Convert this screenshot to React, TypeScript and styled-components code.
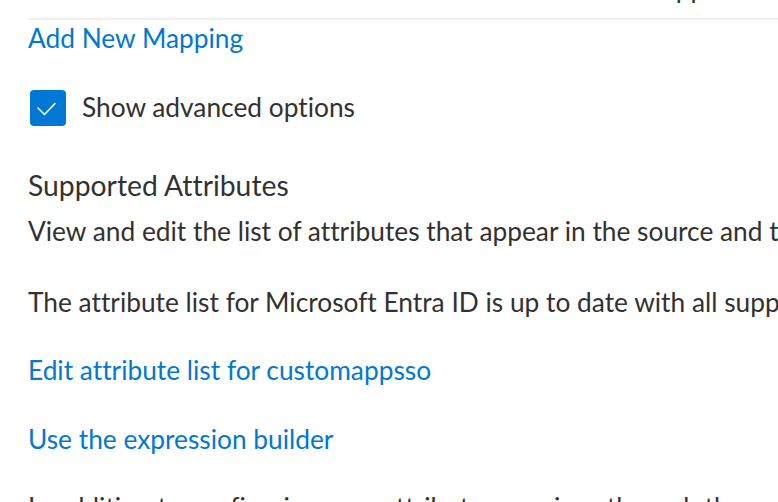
import React from "react";
import styled, { createGlobalStyle } from "styled-components";

const Global = createGlobalStyle`
  html, body {
    margin: 0;
    padding: 0;
    background: #ffffff;
    overflow: hidden;
  }
  body {
    font-family: Lato, "Liberation Sans", Arial, sans-serif;
    font-size: 26.3px;
    line-height: 36px;
    color: #323130;
    font-variant-ligatures: none;
    font-feature-settings: "liga" 0, "dlig" 0;
  }
`;

const Page = styled.main`
  width: 778px;
  height: 502px;
  overflow: hidden;
  padding-left: 28px;
  box-sizing: border-box;
  white-space: nowrap;
`;

const TableRow = styled.div`
  display: grid;
  grid-template-columns: 619px 1fr;
  align-items: start;
  height: 17.5px;
  overflow: hidden;
  border-bottom: 2px solid #f0f0f0;
`;

const Cell = styled.span`
  margin-top: -30px;
  color: #323130;
`;

const Link = styled.a<{ $gap?: number }>`
  display: block;
  width: max-content;
  color: #0078d4;
  text-decoration: none;
  cursor: pointer;
  margin-top: ${(p) => p.$gap ?? 0}px;
`;

const CheckRow = styled.label`
  display: flex;
  align-items: center;
  gap: 16px;
  margin-top: 34.5px;
  margin-left: 2px;
  height: 36px;
  cursor: pointer;
`;

const Box = styled.span`
  display: inline-flex;
  align-items: center;
  justify-content: center;
  width: 36px;
  height: 36px;
  border-radius: 4px;
  background: #0078d4;
  flex: none;
`;

const CheckLabel = styled.span`
  margin-top: -2px;
`;

const Heading = styled.h2`
  margin: 41px 0 0;
  font-size: 28.3px;
  font-weight: 400;
  line-height: 36px;
  color: #323130;
`;

const Text = styled.p<{ $gap: number }>`
  margin: ${(p) => p.$gap}px 0 0;
  color: #323130;
`;

export default function App() {
  return (
    <>
      <Global />
      <Page>
        <TableRow>
          <span />
          <Cell>Supp</Cell>
        </TableRow>
        <Link>Add New Mapping</Link>
        <CheckRow>
          <Box>
            <svg width="36" height="36" viewBox="0 0 36 36" aria-hidden>
              <polyline
                points="8,18 14.5,24.5 25,13.5"
                fill="none"
                stroke="#ffffff"
                strokeWidth="1.6"
                strokeLinecap="round"
                strokeLinejoin="round"
              />
            </svg>
          </Box>
          <CheckLabel>Show advanced options</CheckLabel>
        </CheckRow>
        <Heading>Supported Attributes</Heading>
        <Text $gap={10}>
          View and edit the list of attributes that appear in the source and target systems.
        </Text>
        <Text $gap={35}>
          The attribute list for Microsoft Entra ID is up to date with all supported attributes.
        </Text>
        <Link $gap={32.3}>Edit attribute list for customappsso</Link>
        <Link $gap={33}>Use the expression builder</Link>
        <Text $gap={31.7}>
          In addition to configuring your attribute mappings through the user interface, you can review, download, and edit a JSON representation of your schema.
        </Text>
      </Page>
    </>
  );
}
